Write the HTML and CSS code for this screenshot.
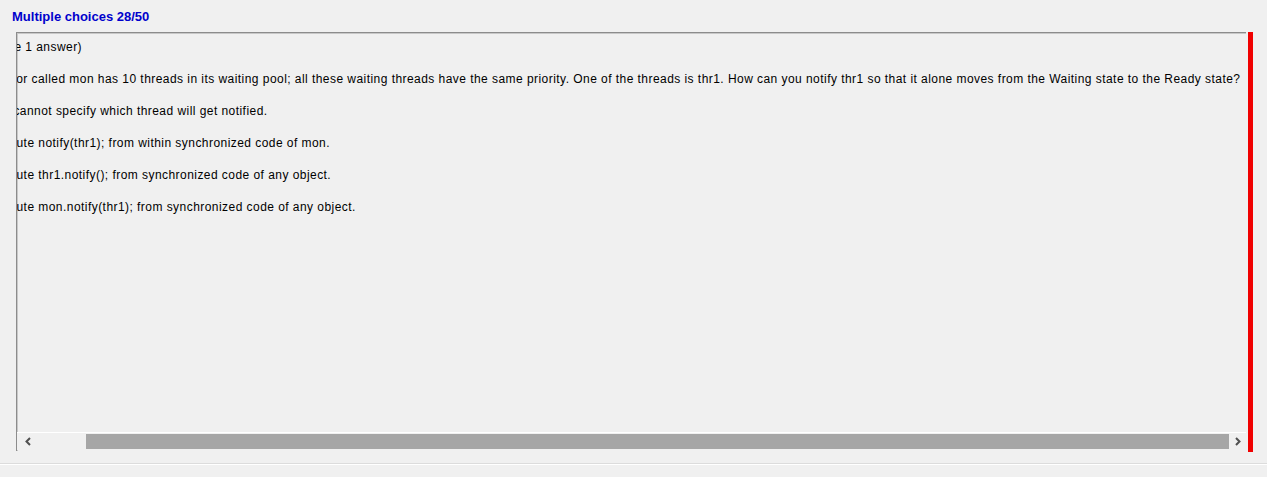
FILE: index.html
```html
<!DOCTYPE html>
<html>
<head>
<meta charset="utf-8">
<link rel="stylesheet" href="styles.css">
</head>
<body>
<div class="title">Multiple choices 28/50</div>
<div class="main">
  <div class="panel">
    <div class="viewport">
      <div class="content">
        <div class="line q">(Choose 1 answer)</div>
        <div class="line q">A monitor called mon has 10 threads in its waiting pool; all these waiting threads have the same priority. One of the threads is thr1. How can you notify thr1 so that it alone moves from the Waiting state to the Ready state?</div>
        <div class="line opt"><span class="radio"></span>You cannot specify which thread will get notified.</div>
        <div class="line opt"><span class="radio"></span>Execute notify(thr1); from within synchronized code of mon.</div>
        <div class="line opt"><span class="radio"></span>Execute thr1.notify(); from synchronized code of any object.</div>
        <div class="line opt"><span class="radio"></span>Execute mon.notify(thr1); from synchronized code of any object.</div>
      </div>
    </div>
    <div class="hscroll">
      <div class="arrow left">
        <svg width="8" height="9" viewBox="0 0 8 9"><path d="M6 1 L2.5 4.5 L6 8" fill="none" stroke="#505050" stroke-width="2"/></svg>
      </div>
      <div class="track">
        <div class="gap"></div>
        <div class="thumb"></div>
      </div>
      <div class="arrow right">
        <svg width="8" height="9" viewBox="0 0 8 9"><path d="M2 1 L5.5 4.5 L2 8" fill="none" stroke="#505050" stroke-width="2"/></svg>
      </div>
    </div>
  </div>
  <div class="redbar"></div>
</div>
<div class="footer"></div>
</body>
</html>
```

FILE: styles.css
```css
html, body {
  margin: 0;
  padding: 0;
  background: #f0f0f0;
  width: 1267px;
  height: 477px;
  overflow: hidden;
}
body {
  font-family: "Liberation Sans", Arial, sans-serif;
  font-size: 12px;
  color: #000;
}
.title {
  font-weight: bold;
  font-size: 13px;
  color: #0000cc;
  padding: 10px 0 0 12px;
  height: 22px;
  box-sizing: border-box;
  line-height: 14px;
}
.main {
  display: flex;
  margin-top: 10px;
  margin-left: 16px;
  gap: 2px;
  height: 420px;
}
.panel {
  width: 1230px;
  height: 419px;
  box-sizing: border-box;
  border-top: 1px solid #8c8c8c;
  border-left: 1px solid #8c8c8c;
  box-shadow: inset 1px 1px 0 #c8c8c8;
  display: flex;
  flex-direction: column;
}
.viewport {
  flex: 1;
  overflow: hidden;
  padding-left: 1px;
}
.content {
  margin-left: -45px;
  white-space: nowrap;
  padding-top: 7px;
  letter-spacing: 0.45px;
}
.line {
  height: 32px;
  line-height: 14px;
}
.opt {
  display: flex;
  align-items: flex-start;
}
.radio {
  display: inline-block;
  flex: none;
  width: 13px;
  height: 13px;
  margin-right: 2px;
}
.hscroll {
  height: 17px;
  display: flex;
  background: #f0f0f0;
  border-top: 1px solid #fff;
  margin-bottom: 1px;
}
.arrow {
  width: 17px;
  display: flex;
  align-items: center;
  justify-content: center;
}
.arrow.left {
  padding-left: 2px;
}
.track {
  flex: 1;
  display: flex;
  padding: 1px 0;
}
.gap {
  width: 50px;
}
.thumb {
  flex: 1;
  background: #a6a6a6;
}
.redbar {
  width: 5px;
  height: 420px;
  background: #f00000;
}
.footer {
  margin-top: 11px;
  border-top: 1px solid #dcdcdc;
  box-shadow: inset 0 1px 0 #fff;
  height: 14px;
}
```
